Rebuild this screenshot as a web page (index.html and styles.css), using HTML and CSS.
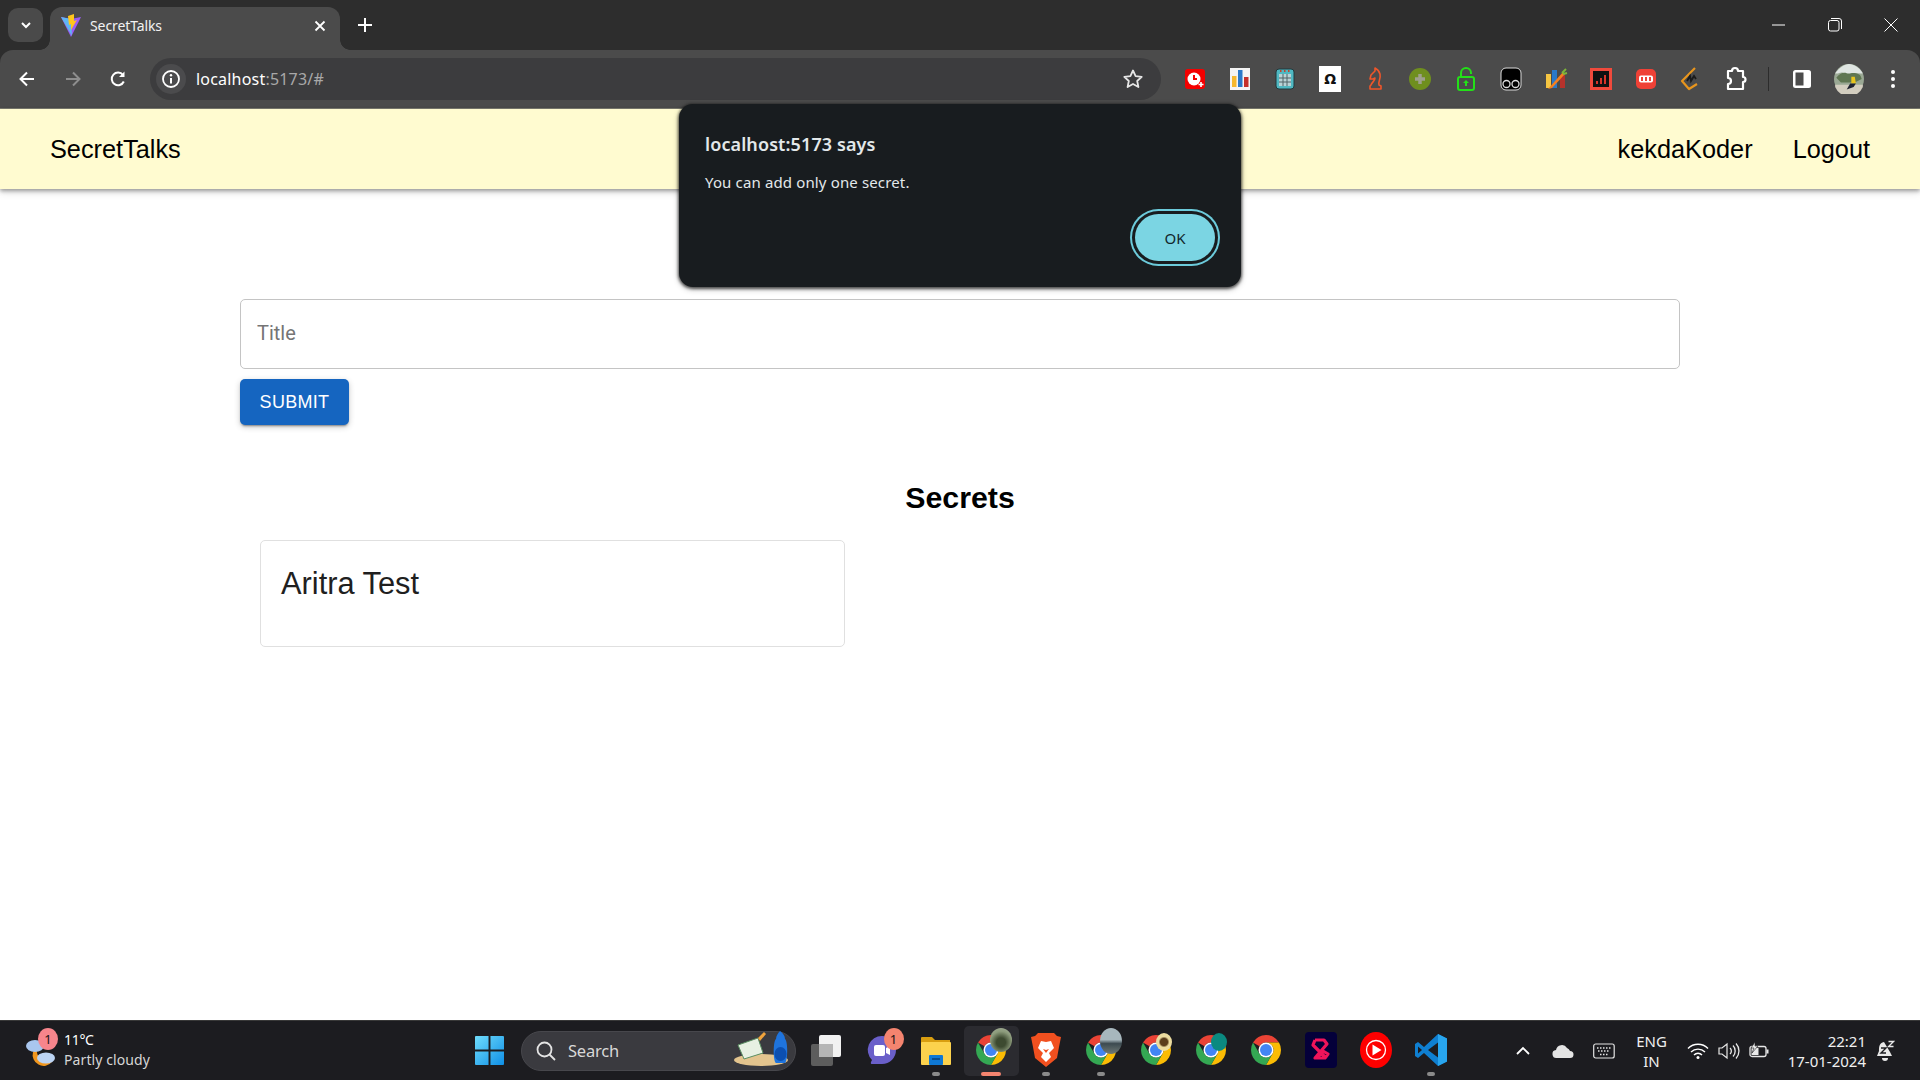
FILE: index.html
```html
<!DOCTYPE html>
<html lang="en">
<head>
<meta charset="utf-8">
<title>SecretTalks</title>
<link rel="stylesheet" href="styles.css">
</head>
<body>
<svg class="defs" aria-hidden="true">
  <defs>
    <symbol id="chrome" viewBox="4 4 40 40">
      <path fill="#ea4335" d="M6.68 14A20 20 0 0 1 41.32 14H24A10 10 0 0 0 15.34 19Z"/>
      <path fill="#fbbc04" d="M41.32 14A20 20 0 0 1 24 44L32.66 29A10 10 0 0 0 24 14Z"/>
      <path fill="#34a853" d="M24 44A20 20 0 0 1 6.68 14L15.34 29A10 10 0 0 0 32.66 29Z"/>
      <circle cx="24" cy="24" r="10" fill="#fff"/>
      <circle cx="24" cy="24" r="8" fill="#4285f4"/>
    </symbol>
  </defs>
</svg>

<div class="browser-frame">
<header class="tabstrip">
  <button class="tab-search"><svg width="14" height="14" viewBox="0 0 14 14"><path d="M3 5l4 4 4-4" fill="none" stroke="#fff" stroke-width="2"/></svg></button>
  <div class="tab">
    <svg class="favicon" width="22" height="24" viewBox="0 0 22 24">
      <path d="M1 3l10 2 10-2-10 20z" fill="#9a5cf5"/>
      <path d="M1 3l10 2 1 17z" fill="#5fb6f5"/>
      <path d="M14 0L8 2l1 9 2-1 0 6 6-10-3 1z" fill="#ffc61c"/>
    </svg>
    <span class="tab-title">SecretTalks</span>
    <svg class="tab-close" width="14" height="14" viewBox="0 0 14 14"><path d="M2.5 2.5l9 9M11.5 2.5l-9 9" stroke="#fff" stroke-width="1.8"/></svg>
  </div>
  <svg class="new-tab" width="16" height="16" viewBox="0 0 16 16"><path d="M8 1v14M1 8h14" stroke="#fff" stroke-width="2"/></svg>
  <div class="window-controls">
    <svg width="14" height="14" viewBox="0 0 14 14"><path d="M0 7h13" stroke="#fff" stroke-width="1"/></svg>
    <svg width="14" height="14" viewBox="0 0 14 14"><rect x=".5" y="2.5" width="10.5" height="10.5" rx="2" fill="none" stroke="#fff"/><path d="M3 .5h8a2.500 2.500 0 0 1 2.500 2.500v8" fill="none" stroke="#fff"/></svg>
    <svg width="14" height="14" viewBox="0 0 14 14"><path d="M.5.5l13 13M13.500.5l-13 13" stroke="#fff" stroke-width="1"/></svg>
  </div>
</header>

<nav class="toolbar">
  <div class="nav-buttons">
    <svg width="18" height="18" viewBox="0 0 18 18"><path d="M16 9H3M9 2.500L2.500 9 9 15.500" fill="none" stroke="#fff" stroke-width="2"/></svg>
    <svg width="18" height="18" viewBox="0 0 18 18"><path d="M2 9h13M9 2.500L15.500 9 9 15.500" fill="none" stroke="#8e8e8e" stroke-width="2"/></svg>
    <svg width="18" height="18" viewBox="0 0 18 18"><path d="M14.800 11.500A6.300 6.300 0 1 1 14 5" fill="none" stroke="#fff" stroke-width="2"/><path d="M15.500 1.500v5.500H10z" fill="#fff"/></svg>
  </div>
  <div class="omnibox">
    <span class="site-info"><svg width="20" height="20" viewBox="0 0 20 20"><circle cx="10" cy="10" r="8" fill="none" stroke="#fff" stroke-width="1.800"/><path d="M10 9v5.500" stroke="#fff" stroke-width="2"/><circle cx="10" cy="6.300" r="1.200" fill="#fff"/></svg></span>
    <span class="url"><span class="url-host">localhost</span>:5173/#</span>
    <svg class="star" width="22" height="22" viewBox="0 0 22 22"><path d="M11 2.500l2.600 5.600 6.100.7-4.500 4.200 1.200 6L11 16l-5.400 3 1.200-6-4.500-4.200 6.100-.7z" fill="none" stroke="#e6e6e6" stroke-width="1.800" stroke-linejoin="round"/></svg>
  </div>
  <div class="extensions">
    <svg class="ext" viewBox="0 0 26 26"><rect x="3" y="3" width="20" height="20" rx="3" fill="#f40000"/><circle cx="12" cy="13" r="6.500" fill="#fff"/><path d="M12 9v4h3" stroke="#f40000" fill="none" stroke-width="2"/><path d="M19 16v5M16.500 18.500h5" stroke="#fff" stroke-width="1.600"/></svg>
    <svg class="ext" viewBox="0 0 26 26"><rect x="3" y="2" width="20" height="22" fill="#f4f4f4"/><rect x="5" y="10" width="4.500" height="11" fill="#f5b82e"/><rect x="11" y="4" width="4.500" height="17" fill="#2a79c9"/><rect x="17" y="11" width="4.500" height="10" fill="#c4302b"/></svg>
    <svg class="ext" viewBox="0 0 26 26"><rect x="4" y="3" width="18" height="20" rx="3" fill="#4fb8c2" stroke="#22393c"/><rect x="7" y="8" width="12" height="12" fill="#b9d3d6"/><path d="M7 12h12M7 16h12M11 8v12M15 8v12" stroke="#516569" stroke-width="1"/><path d="M8 5h1.500M12 5h1.500M16 5h1.500" stroke="#c2452f" stroke-width="2"/></svg>
    <span class="ext ext-omega">Ω</span>
    <svg class="ext" viewBox="0 0 26 26"><path d="M8 23h11v-3l-2-1c-1-4 2-6 1-11-1-3-3-5-5-6v3L9 9l-1 4 3 0 2-1c0 3-3 4-4 7l-1 1z" fill="none" stroke="#f0562a" stroke-width="1.600" stroke-linejoin="round"/></svg>
    <svg class="ext" viewBox="0 0 26 26"><circle cx="13" cy="13" r="11" fill="#6f8f1e"/><path d="M13 8v10M8 13h10" stroke="#9fa08c" stroke-width="3.500"/></svg>
    <svg class="ext" viewBox="0 0 26 26"><rect x="5" y="11" width="16" height="13" rx="2" fill="none" stroke="#23e018" stroke-width="2"/><path d="M8 11V7a5 5 0 0 1 10 0v1" fill="none" stroke="#23e018" stroke-width="2"/><path d="M13 14l3 3h-2v3h-2v-3h-2z" fill="#23e018"/></svg>
    <svg class="ext" viewBox="0 0 26 26"><rect x="3" y="2" width="20" height="22" rx="5" fill="#000" stroke="#ddd"/><circle cx="8.500" cy="18" r="3.500" fill="none" stroke="#ddd" stroke-width="1.300"/><circle cx="17.500" cy="18" r="3.500" fill="none" stroke="#ddd" stroke-width="1.300"/></svg>
    <svg class="ext" viewBox="0 0 26 26"><rect x="3" y="8" width="5" height="14" fill="#f5c542"/><rect x="9" y="4" width="5" height="18" fill="#2a79c9"/><rect x="17" y="9" width="5" height="13" fill="#b6322c"/><path d="M5 23L20 6l2 2-13 14z" fill="#f48020"/><path d="M19 7l4-4M20 8l4-1" stroke="#7db53a" stroke-width="2"/></svg>
    <svg class="ext" viewBox="0 0 26 26"><rect x="2" y="2" width="22" height="22" fill="#f04a3c"/><rect x="5" y="5" width="16" height="16" fill="#111"/><path d="M9 18v-3M13 18v-6M17 18V9" stroke="#d8342a" stroke-width="2"/></svg>
    <svg class="ext" viewBox="0 0 26 26"><rect x="3" y="3" width="20" height="20" rx="5" fill="#ef4136"/><rect x="6" y="9.500" width="14" height="7" rx="2" fill="#fff"/><path d="M9 11v4M13 11v4M17 11v4" stroke="#ef4136" stroke-width="2"/></svg>
    <svg class="ext" viewBox="0 0 26 26"><path d="M17 2L4 15l7 8 8-5" fill="none" stroke="#e8951d" stroke-width="2.200" stroke-linejoin="round"/><path d="M9 15l3-5 1 5 3-5 2 3" fill="none" stroke="#1b1b1b" stroke-width="1.800"/></svg>
    <svg class="ext" viewBox="0 0 26 26"><path d="M10 5a3 3 0 0 1 6 0h5v6a2.500 2.500 0 0 1 0 5v7H6v-5a3 3 0 0 0 0-6V5z" transform="translate(-1 0)" fill="none" stroke="#fff" stroke-width="2.200" stroke-linejoin="round"/></svg>
    <span class="toolbar-sep"></span>
    <svg class="ext" viewBox="0 0 26 26"><rect x="4" y="4" width="18" height="18" rx="2.500" fill="#fff"/><rect x="6.500" y="6.500" width="8" height="13" fill="#4b4b4b"/></svg>
    <svg class="ext ext-avatar" viewBox="0 0 26 26"><circle cx="13" cy="13" r="13" fill="#9aa894"/><path d="M1 8C5 3 9 0 13 0s9 3 12 8c-3 1-6-1-9 0s-4 2-7 0-5 1-8 0z" fill="#dfe5e2"/><path d="M2 12c3-4 6-5 9-4s4-1 8 0 4 2 5 5l-6 3H6z" fill="#5f7652"/><path d="M1 18h24v2a13 13 0 0 1-24 0z" fill="#d2cdbf"/><path d="M15 11h3l1 6h-4z" fill="#e8c51e"/><path d="M11 22l3-5h5l-2 3z" fill="#1e2230"/></svg>
    <svg class="ext" viewBox="0 0 26 26"><circle cx="13" cy="6" r="2" fill="#fff"/><circle cx="13" cy="13" r="2" fill="#fff"/><circle cx="13" cy="20" r="2" fill="#fff"/></svg>
  </div>
</nav>
</div>

<main class="page">
  <div class="navbar">
    <a class="brand">SecretTalks</a>
    <div class="nav-links"><a>kekdaKoder</a><a>Logout</a></div>
  </div>
  <section class="content">
    <form class="secret-form">
      <input class="title-input" placeholder="Title">
      <button type="button" class="submit">Submit</button>
    </form>
    <h2 class="secrets-heading">Secrets</h2>
    <div class="cards">
      <article class="card">Aritra Test</article>
    </div>
  </section>
  <div class="alert" role="alertdialog">
    <div class="alert-title">localhost:5173 says</div>
    <div class="alert-msg">You can add only one secret.</div>
    <div class="alert-actions"><button class="alert-ok">OK</button></div>
  </div>
</main>

<footer class="taskbar">
  <div class="weather">
    <span class="weather-icon">
      <svg width="34" height="38" viewBox="0 0 34 38"><path d="M9 20a11 11 0 0 0 19 10A12 12 0 0 1 13 16z" fill="#f0961e"/><ellipse cx="11" cy="14" rx="9" ry="6" fill="#a9c6ee"/><ellipse cx="22" cy="26" rx="9" ry="5.500" fill="#bcd4f4"/></svg>
      <span class="weather-badge">1</span>
    </span>
    <div class="weather-text"><span class="temp">11°C</span><span>Partly cloudy</span></div>
  </div>
  <svg class="start" width="29" height="29" viewBox="0 0 30 30"><defs><linearGradient id="winblue" x1="0" y1="0" x2="1" y2="1"><stop offset="0" stop-color="#6fdcfb"/><stop offset="1" stop-color="#0f8fe6"/></linearGradient></defs><path fill="url(#winblue)" d="M0 1a1 1 0 0 1 1-1h13v14H0zM16 0h13a1 1 0 0 1 1 1v13H16zM0 16h14v14H1a1 1 0 0 1-1-1zM16 16h14v13a1 1 0 0 1-1 1H16z"/></svg>
  <div class="search">
    <svg width="22" height="22" viewBox="0 0 22 22"><circle cx="9.500" cy="9.500" r="7" fill="none" stroke="#e4e4e4" stroke-width="1.800"/><path d="M14.500 14.500l5.500 5.500" stroke="#e4e4e4" stroke-width="1.800"/></svg>
    <span class="search-label">Search</span>
    <svg class="search-art" width="58" height="36" viewBox="0 0 58 36"><ellipse cx="27" cy="29" rx="27" ry="6" fill="#e3c48e"/><path d="M4 14l20-7 5 15-19 6z" fill="#e7f0e2" stroke="#5c8f63"/><path d="M24 7l6-6 2 2-6 7z" fill="#f0a33c"/><path d="M42 8c0-3 2-6 4-8 3 2 5 5 5 8 3 2 3 22 0 24H42c-3-2-3-22 0-24z" fill="#1f74dd"/><ellipse cx="46.500" cy="23" rx="6" ry="7" fill="#0c4fb0"/></svg>
  </div>
  <div class="task-icons">
    <span class="task"><svg width="32" height="32" viewBox="0 0 32 32"><rect x="1" y="10" width="22" height="22" rx="2" fill="#5d5d5d"/><rect x="9" y="1" width="22" height="22" rx="2" fill="#f1f1f1"/><rect x="9" y="10" width="14" height="13" fill="#b5b5b5"/></svg></span>
    <span class="task"><svg width="32" height="34" viewBox="0 0 32 32"><path d="M17 2a14 14 0 0 1 0 28H7c-1 0-1.500-.5-1-2l1-2A14 14 0 0 1 17 2z" fill="#6a5fc9"/><rect x="9" y="11" width="11" height="11" rx="2" fill="#fff"/><path d="M21 14l4-2v9l-4-2z" fill="#fff"/></svg><span class="badge badge-chat">1</span></span>
    <span class="task task-dot"><svg width="32" height="32" viewBox="0 0 32 32"><path d="M1 4a1 1 0 0 1 1-1h10l3 3h15v6H1z" fill="#d99e10"/><rect x="1" y="8" width="30" height="23" rx="1" fill="#fcd24d"/><rect x="9" y="21" width="14" height="10" rx="1" fill="#0f78d4"/><rect x="12" y="24" width="8" height="2" fill="#0a4d8f"/></svg></span>
    <span class="task task-active"><svg class="chrome-ico"><use href="#chrome"/></svg><span class="over over-a"></span></span>
    <span class="task task-dot"><svg width="32" height="36" viewBox="0 0 32 36"><path d="M8 1h16l3 3 4 1-2 10-2 11-11 9-11-9-2-11-2-10 4-1z" fill="#f1501f"/><path d="M16 30l5-5-2-4 5-5-3-7-5 1-5-1-3 7 5 5-2 4z" fill="#fff"/><path d="M13 17l3 1 3-1-3 4z" fill="#f1501f"/></svg></span>
    <span class="task task-dot"><svg class="chrome-ico"><use href="#chrome"/></svg><span class="over over-b"></span></span>
    <span class="task"><svg class="chrome-ico"><use href="#chrome"/></svg><span class="over over-c"></span></span>
    <span class="task"><svg class="chrome-ico"><use href="#chrome"/></svg><span class="over over-d"></span></span>
    <span class="task"><svg class="chrome-ico"><use href="#chrome"/></svg></span>
    <span class="task"><svg width="32" height="36" viewBox="0 0 32 36"><rect width="32" height="36" rx="4" fill="#04003a"/><path d="M10 8h9l3 4-12 14h10l3-4-5-3-6 7M10 8l-2 5 13 13" fill="none" stroke="#f0145a" stroke-width="3.200" stroke-linejoin="round"/></svg></span>
    <span class="task"><svg width="32" height="36" viewBox="0 0 32 36"><ellipse cx="16" cy="18" rx="16" ry="18" fill="#f00"/><circle cx="16" cy="18" r="9.500" fill="none" stroke="#fff" stroke-width="1.300"/><path d="M12.500 12.500l9 5.500-9 5.500z" fill="#fff"/></svg></span>
    <span class="task task-dot"><svg width="32" height="34" viewBox="0 0 32 34"><path d="M23 1l9 4.500v23L23 33 9 20l-6 5-3-2V11l3-2 6 5z" fill="#0f7fd1"/><path d="M23 1l9 4.500v23L23 33z" fill="#28a5ee"/><path d="M23 9.500L13 17l10 7.500z" fill="#1c1c20"/><path d="M3 13.500v7l4-3.500z" fill="#1c1c20"/></svg></span>
  </div>
  <div class="tray">
    <svg width="16" height="16" viewBox="0 0 16 16"><path d="M2 11l6-6 6 6" fill="none" stroke="#fff" stroke-width="1.800"/></svg>
    <svg class="tray-cloud" width="22" height="16" viewBox="0 0 22 16"><path d="M5 15a4 4 0 0 1-1-8 6 6 0 0 1 11-2 5 5 0 0 1 3 3 3.500 3.500 0 0 1 0 7z" fill="#e4e4e4"/></svg>
    <svg class="tray-kbd" width="22" height="16" viewBox="0 0 22 16"><rect x=".7" y="1" width="20.500" height="14" rx="2" fill="none" stroke="#e4e4e4" stroke-width="1.200"/><path d="M4 5h14M5 8h12M7 11.500h8" stroke="#e4e4e4" stroke-width="1.300" stroke-dasharray="1.500 1.500"/></svg>
    <div class="lang"><span>ENG</span><span>IN</span></div>
    <svg class="tray-wifi" width="22" height="18" viewBox="0 0 22 18"><path d="M1 6.500a14 14 0 0 1 20 0M4 10a10 10 0 0 1 14 0M7 13a5.500 5.500 0 0 1 8 0" fill="none" stroke="#fff" stroke-width="1.400"/><circle cx="11" cy="15.500" r="1.500" fill="#fff"/></svg>
    <svg class="tray-vol" width="22" height="18" viewBox="0 0 22 18"><path d="M1 6h3l5-4v14l-5-4H1z" fill="none" stroke="#e8e8e8" stroke-width="1.200"/><path d="M12 6a4 4 0 0 1 0 6M15 3.500a8 8 0 0 1 0 11M18 1.500a11 11 0 0 1 0 15" fill="none" stroke="#e8e8e8" stroke-width="1.300"/></svg>
    <svg class="tray-batt" width="22" height="18" viewBox="0 0 22 18"><rect x="2" y="4.500" width="16" height="10" rx="2" fill="none" stroke="#e8e8e8" stroke-width="1.300"/><rect x="3.500" y="6" width="7" height="7" fill="#e8e8e8"/><path d="M18.500 7.500h2v4h-2z" fill="#e8e8e8"/><path d="M7 0L3 6h3l-2 5 6-7H7z" fill="#e8e8e8" stroke="#1c1c20" stroke-width=".6"/></svg>
    <div class="clock"><span>22:21</span><span>17-01-2024</span></div>
    <svg class="tray-bell" width="20" height="22" viewBox="0 0 20 22"><path d="M9 2C4 3 4 7 4 11l-2 5h15l-2-4" fill="#e8e8e8"/><path d="M7 18h6a3 3 0 0 1-6 0z" fill="#e8e8e8"/><path d="M6 8h5L6 13h5M13 2h5l-5 5h5" fill="none" stroke="#1c1c20" stroke-width="1.400"/><path d="M13.500 1.500h5l-5 5h5" fill="none" stroke="#e8e8e8" stroke-width="1.300"/></svg>
  </div>
</footer>
</body>
</html>
```

FILE: styles.css
```css
* { box-sizing: border-box; }
html, body { margin: 0; height: 100%; }
body {
  display: flex;
  flex-direction: column;
  height: 1080px;
  overflow: hidden;
  background: #fff;
  font-family: "Liberation Sans", Arial, sans-serif;
}
svg { display: block; flex: none; }
.defs { position: absolute; width: 0; height: 0; }
button { font: inherit; border: 0; }

/* browser frame */
.browser-frame { flex: none; background: #2d2d2d; }

/* tab strip */
.tabstrip {
  height: 50px;
  display: flex;
  align-items: flex-end;
  padding-left: 8px;
}
.tab-search {
  width: 35px;
  height: 34px;
  margin-bottom: 8px;
  border-radius: 10px;
  background: #4a4a4a;
  display: flex;
  align-items: center;
  justify-content: center;
  padding: 0;
}
.tab {
  width: 290px;
  height: 43px;
  margin-left: 7px;
  padding: 0 13px 6px 10px;
  background: #4b4b4b;
  border-radius: 12px 12px 0 0;
  display: flex;
  align-items: center;
  gap: 8px;
  position: relative;
}
.tab::before, .tab::after {
  content: "";
  position: absolute;
  bottom: 0;
  width: 10px;
  height: 10px;
}
.tab::before { left: -10px; background: radial-gradient(circle at 0 0, transparent 9.500px, #4b4b4b 10px); }
.tab::after { right: -10px; background: radial-gradient(circle at 100% 0, transparent 9.500px, #4b4b4b 10px); }
.tab-title {
  flex: 1;
  color: #f2f2f2;
  font: 14px "Noto Sans", sans-serif;
  letter-spacing: -.1px;
}
.new-tab { margin: 0 0 17px 17px; }
.window-controls {
  margin-left: auto;
  align-self: center;
  display: flex;
  gap: 42px;
  padding-right: 22px;
}

/* toolbar */
.toolbar {
  height: 59px;
  background: #4b4b4b;
  border-bottom: 1px solid #7a7a70;
  border-radius: 13px 13px 0 0;
  display: flex;
  align-items: center;
}
.nav-buttons {
  display: flex;
  gap: 27.500px;
  padding-left: 18px;
  width: 150px;
}
.omnibox {
  width: 1011px;
  height: 42px;
  background: #3c3c3e;
  border-radius: 21px;
  display: flex;
  align-items: center;
  padding: 0 17px 0 6px;
}
.site-info {
  width: 30px;
  height: 30px;
  border-radius: 50%;
  background: #4b4b4d;
  display: flex;
  align-items: center;
  justify-content: center;
}
.url {
  margin-left: 10px;
  flex: 1;
  color: #a8a8a8;
  font: 16px "Noto Sans", sans-serif;
  letter-spacing: .2px;
}
.url-host { color: #fff; }
.extensions {
  display: flex;
  align-items: center;
  gap: 19.100px;
  padding-left: 21px;
}
.ext { width: 26px; height: 26px; flex: none; }
.ext-omega {
  background: #fff;
  color: #111;
  font: bold 14px/26px "DejaVu Sans", sans-serif;
  text-align: center;
  margin: 0 2px;
  width: 22px;
}
.toolbar-sep { width: 1px; height: 24px; background: #2c2c2c; margin-right: 1px; }
.ext-avatar { width: 30px; height: 30px; margin-right: -4px; }

/* page */
.page {
  flex: 1;
  position: relative;
  min-height: 0;
}
.navbar {
  height: 80px;
  background: #fffbd0;
  box-shadow: 0 2px 4px rgba(0,0,0,.35), 0 4px 8px rgba(0,0,0,.1);
  display: flex;
  align-items: center;
  justify-content: space-between;
  padding: 0 50px;
  font-size: 25.300px;
  color: #000;
}
.nav-links { display: flex; gap: 40px; }
.content {
  padding: 110px 240px 0;
}
.secret-form { display: flex; flex-direction: column; align-items: flex-start; gap: 10px; }
.title-input {
  width: 100%;
  height: 70px;
  border: 1px solid #c4c4c4;
  border-radius: 5px;
  padding: 0 16px 2px;
  font: 20px "Roboto", sans-serif;
  color: #222;
  outline: none;
}
.title-input::placeholder { color: #757575; opacity: 1; }
.submit {
  width: 109px;
  height: 46px;
  background: #1565c0;
  color: #fff;
  border-radius: 5px;
  text-transform: uppercase;
  font: 500 18px "Liberation Sans", sans-serif;
  letter-spacing: .3px;
  padding: 0;
  box-shadow: 0 3px 1px -2px rgba(0,0,0,.2), 0 2px 2px rgba(0,0,0,.14), 0 2px 6px rgba(0,0,0,.2);
}
.secrets-heading {
  margin: 55px 0 0;
  font-size: 30.300px;
  line-height: 36px;
  text-align: center;
  font-weight: bold;
  color: #000;
}
.cards { padding: 24px 20px 0; }
.card {
  width: 585px;
  height: 107px;
  border: 1px solid #e0e0e0;
  border-radius: 5px;
  padding: 25px 20px;
  font-size: 30.800px;
  line-height: 36px;
  color: #1f1f1f;
}

/* alert */
.alert {
  position: absolute;
  left: 679px;
  top: -5px;
  width: 562px;
  height: 183px;
  background: #181c1f;
  border-radius: 14px;
  box-shadow: 0 1px 3px 1px rgba(0,0,0,.6), 0 2px 6px rgba(0,0,0,.3);
  padding: 27px 26px 0;
  color: #e3e8ea;
  font-family: "Noto Sans", sans-serif;
}
.alert-title { font-size: 18px; line-height: 26px; font-weight: 600; letter-spacing: .1px; }
.alert-msg { font-size: 15px; line-height: 22px; margin-top: 13.500px; letter-spacing: .14px; }
.alert-actions { display: flex; justify-content: flex-end; margin-top: 16.500px; margin-right: -5px; }
.alert-ok {
  width: 80px;
  height: 47px;
  border-radius: 24px;
  background: #7bd5e3;
  color: #12272c;
  font: 15px "Noto Sans", sans-serif;
  padding: 0;
  box-shadow: 0 0 0 3px #181c1f, 0 0 0 5px #6ccbdb;
  margin: 5px;
}

/* taskbar */
.taskbar {
  height: 60px;
  flex: none;
  background: #1c1c20;
  border-top: 1px solid #383838;
  display: flex;
  align-items: center;
  color: #f0f0f0;
  font-family: "Noto Sans", sans-serif;
}
.weather { display: flex; flex: none; align-items: center; gap: 6px; width: 475px; padding-left: 24px; }
.weather-icon { position: relative; width: 34px; height: 38px; }
.weather-badge {
  position: absolute;
  left: 14px;
  top: -4px;
  width: 20px;
  height: 22px;
  border-radius: 50%;
  background: #f7858c;
  color: #201315;
  font-size: 13px;
  line-height: 22px;
  text-align: center;
}
.weather-text {
  display: flex;
  flex-direction: column;
  font-size: 14px;
  line-height: 20px;
  letter-spacing: .1px;
  color: #d6d6d6;
  margin-top: -2px;
}
.temp { color: #fff; letter-spacing: -.3px; }
.search {
  width: 275px;
  height: 40px;
  flex: none;
  margin-left: 17px;
  border-radius: 20px;
  background: #3a3a3f;
  border: 1px solid #47474c;
  display: flex;
  align-items: center;
  padding: 0 3px 0 13px;
}
.search-label { margin-left: 11px; font-size: 16.500px; color: #d8d8d8; letter-spacing: -.2px; }
.search-art { margin-left: auto; margin-top: -4px; }
.task-icons { display: flex; flex: none; margin-left: 2.500px; }
.task {
  width: 55px;
  height: 50px;
  padding-bottom: 1px;
  display: flex;
  align-items: center;
  justify-content: center;
  position: relative;
}
.task-dot::after {
  content: "";
  position: absolute;
  bottom: 0;
  left: 50%;
  width: 8px;
  height: 4px;
  margin-left: -4px;
  border-radius: 2px;
  background: #8a8a8a;
}
.task-active {
  background: #2b2b30;
  border-radius: 5px;
}
.task-active::after {
  content: "";
  position: absolute;
  bottom: 0;
  left: 50%;
  width: 20px;
  height: 4px;
  margin-left: -10px;
  border-radius: 2px;
  background: #f4846f;
}
.chrome-ico { width: 30px; height: 34px; }
.badge {
  position: absolute;
  border-radius: 50%;
  text-align: center;
}
.badge-chat {
  left: 30px;
  top: 2px;
  width: 20px;
  height: 22px;
  background: #f4846f;
  color: #201315;
  font-size: 13px;
  line-height: 22px;
}
.over { position: absolute; border-radius: 50%; }
.over-a { left: 26px; top: 2px; width: 22px; height: 24px; background: radial-gradient(circle at 50% 60%, #3d4a30 0 25%, #8b9a7a 60%, #aab4a0); }
.over-b { left: 26px; top: 2px; width: 22px; height: 26px; background: linear-gradient(#a7b7bd 0 45%, #3c4a50 60%, #6f7a76); }
.over-c { left: 27px; top: 7px; width: 16px; height: 18px; background: radial-gradient(circle, #5a3d1c 0 30%, #ecdca0 45%); }
.over-d { left: 27px; top: 7px; width: 16px; height: 18px; background: #0b8a80; }
.tray { display: flex; flex: 1; align-items: center; padding-right: 25px; padding-left: 56px; }
.tray-cloud { margin-left: 21px; }
.tray-kbd { margin-left: 19px; }
.lang {
  display: flex;
  flex-direction: column;
  align-items: center;
  width: 40px;
  margin-left: 17px;
  font-size: 15px;
  line-height: 20px;
}
.tray-wifi { margin-left: 15px; }
.tray-vol { margin-left: 9px; }
.tray-batt { margin-left: 8px; }
.clock {
  display: flex;
  flex-direction: column;
  align-items: flex-end;
  margin-left: auto;
  font-size: 15px;
  line-height: 20px;
}
.tray-bell { margin-left: 9px; }
```
